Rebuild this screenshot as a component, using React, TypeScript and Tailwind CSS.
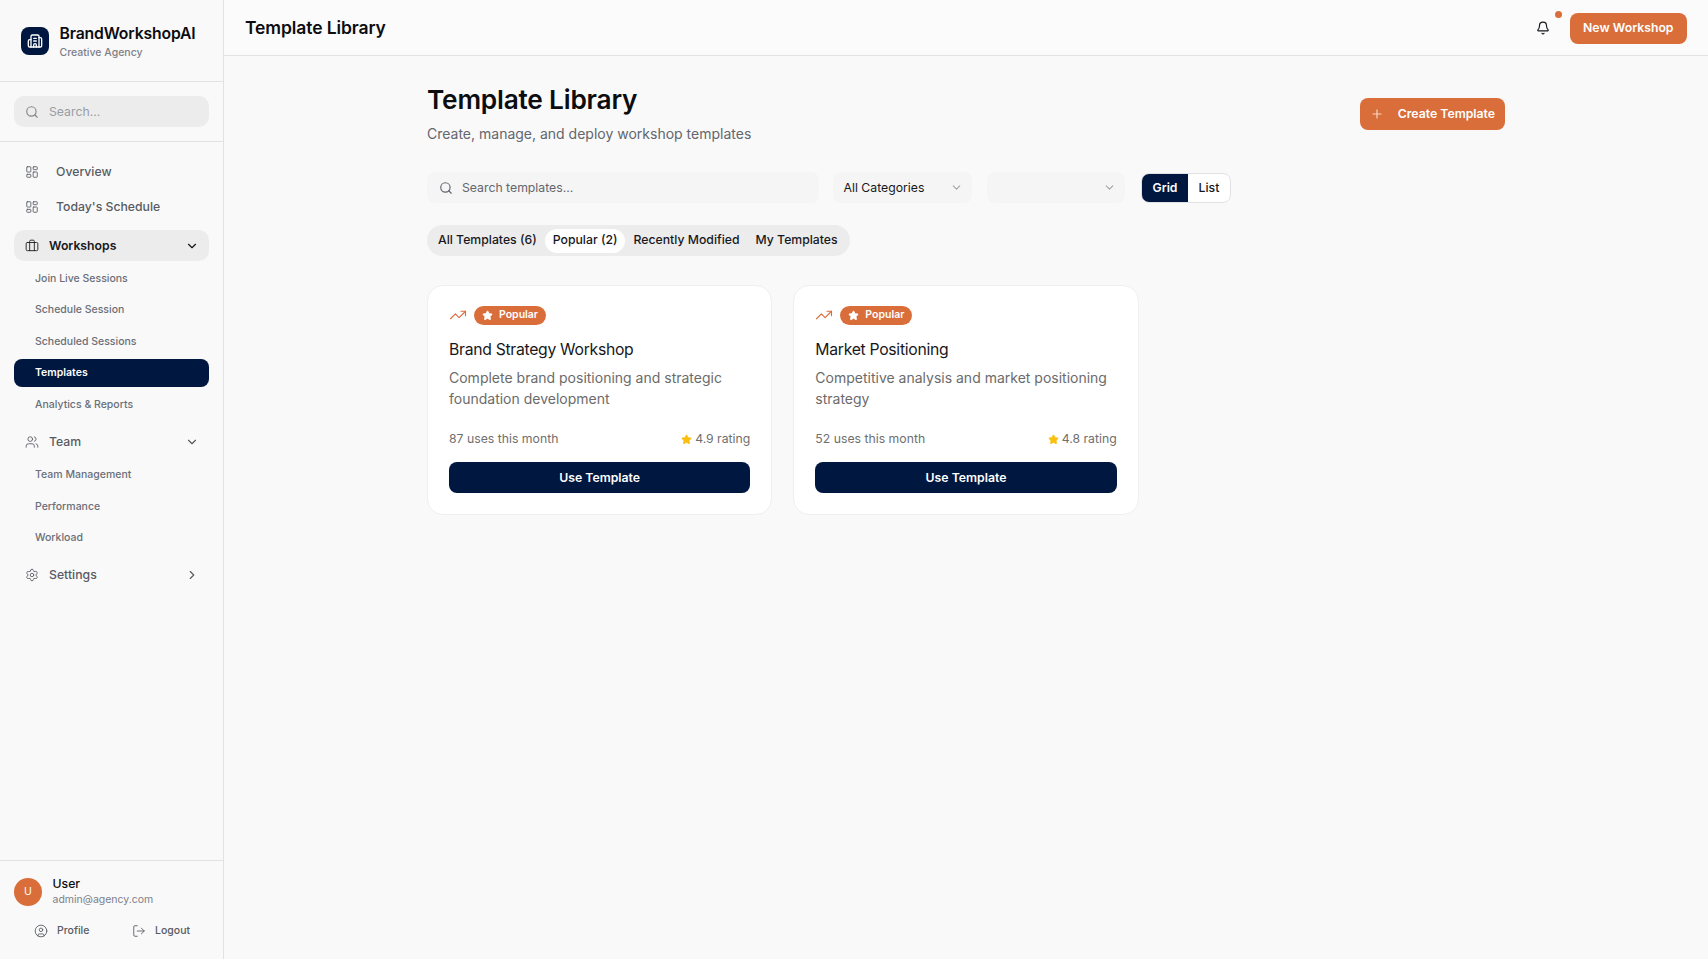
import { Bell, Briefcase, Building2, ChevronDown, ChevronRight, CircleUser, LayoutDashboard, LogOut, Plus, Search, Settings, Star, TrendingUp, Users } from "lucide-react";

const templates = [
  { name: "Brand Strategy Workshop", desc: "Complete brand positioning and strategic foundation development", uses: "87 uses this month", rating: "4.9 rating" },
  { name: "Market Positioning", desc: "Competitive analysis and market positioning strategy", uses: "52 uses this month", rating: "4.8 rating" },
];

const SubItem = ({ label, active }: { label: string; active?: boolean }) => (
  <div className={`h-[28px] pt-[1px] flex items-center pl-[21px] rounded-lg text-[10.5px] ${active ? "bg-[#001740] text-white font-semibold" : "text-[#6b6f78] font-medium"}`}>
    {label}
  </div>
);

const TemplateCard = ({ t }: { t: (typeof templates)[number] }) => (
  <div className="h-[230px] bg-white border border-[#efefef] rounded-2xl px-[21px] pt-[19px]">
    <div className="flex items-center gap-[7px] h-[20px]">
      <TrendingUp className="w-[18px] h-[18px] text-[#d96e3a]" strokeWidth={1.5} />
      <span className="h-[19px] flex items-center gap-[6px] px-[8px] rounded-full bg-[#d96e3a] text-white text-[10.5px] font-semibold">
        <Star className="w-[11px] h-[11px] fill-white" />
        Popular
      </span>
    </div>
    <h3 className="mt-[13px] text-[15.75px] leading-[24px] font-normal text-[#17181c] tracking-[-0.3px]">{t.name}</h3>
    <p className="mt-[5px] text-[14px] leading-[21px] text-[#6b6b6b]">{t.desc}</p>
    <div className="mt-[21px] flex items-center justify-between text-[12.25px] text-[#6f6f6f]">
      <span>{t.uses}</span>
      <span className="flex items-center gap-[3px]">
        <Star className="w-[11px] h-[11px] text-[#fbbf0f] fill-[#fbbf0f]" />
        {t.rating}
      </span>
    </div>
    <button className="mt-[14px] w-full h-[31px] rounded-lg bg-[#001740] text-white text-[12.25px] font-semibold">Use Template</button>
  </div>
);

export default function App() {
  return (
    <div className="flex h-[959px] overflow-hidden bg-[#f9f9f9] font-['Inter',sans-serif]">
      <aside className="w-[224px] shrink-0 h-full flex flex-col border-r border-[#e2e2e2] bg-[#f9f9f9]">
        <div className="h-[82px] shrink-0 flex items-center gap-[10.5px] pl-[21px] border-b border-[#e2e2e2]">
          <div className="w-[28px] h-[28px] rounded-lg bg-[#001740] flex items-center justify-center">
            <Building2 className="w-[16px] h-[16px] text-white" strokeWidth={2} />
          </div>
          <div className="pt-[3px]">
            <div className="text-[15.75px] leading-[20px] font-semibold tracking-[-0.15px] text-[#0c0d10]">BrandWorkshopAI</div>
            <div className="text-[10.5px] leading-[17px] text-[#7d8088] font-medium">Creative Agency</div>
          </div>
        </div>
        <div className="h-[60px] shrink-0 px-[14px] pt-[14px] border-b border-[#e2e2e2]">
          <div className="h-[31px] pt-[1px] rounded-[10px] bg-[#ececec] flex items-center pl-[11px] gap-[10px] text-[12.25px] text-[#9a9ca3]">
            <Search className="w-[14px] h-[14px] text-[#85878d] -mt-[1px]" />
            Search...
          </div>
        </div>
        <nav className="px-[14px] pt-[13px] flex-1">
          <div className="h-[35px] flex items-center pl-[11px] gap-[17px] text-[12.25px] font-medium text-[#585b63]">
            <LayoutDashboard className="w-[14px] h-[14px] -mt-[1px]" strokeWidth={1.5} />
            Overview
          </div>
          <div className="h-[35px] flex items-center pl-[11px] gap-[17px] text-[12.25px] font-medium text-[#585b63]">
            <LayoutDashboard className="w-[14px] h-[14px] -mt-[1px]" strokeWidth={1.5} />
            Today's Schedule
          </div>
          <div className="mt-[5px] h-[31px] pt-[1px] rounded-[10px] bg-[#ececec] flex items-center pl-[11px] pr-[10px] gap-[10px] text-[12.25px] font-semibold text-[#17181c]">
            <Briefcase className="w-[14px] h-[14px] -mt-[1px]" strokeWidth={1.5} />
            <span className="flex-1">Workshops</span>
            <ChevronDown className="w-[14px] h-[14px] -mt-[1px]" />
          </div>
          <div className="mt-[3px] space-y-[3.5px]">
            <SubItem label="Join Live Sessions" />
            <SubItem label="Schedule Session" />
            <SubItem label="Scheduled Sessions" />
            <SubItem label="Templates" active />
            <SubItem label="Analytics & Reports" />
          </div>
          <div className="mt-[8.5px] h-[31px] flex items-center pl-[11px] pr-[10px] gap-[10px] text-[12.25px] font-medium text-[#585b63]">
            <Users className="w-[14px] h-[14px] -mt-[1px]" strokeWidth={1.5} />
            <span className="flex-1">Team</span>
            <ChevronDown className="w-[14px] h-[14px] -mt-[1px]" />
          </div>
          <div className="mt-[3px] space-y-[3.5px]">
            <SubItem label="Team Management" />
            <SubItem label="Performance" />
            <SubItem label="Workload" />
          </div>
          <div className="mt-[8px] h-[31px] flex items-center pl-[11px] pr-[10px] gap-[10px] text-[12.25px] font-medium text-[#585b63]">
            <Settings className="w-[14px] h-[14px] -mt-[1px]" strokeWidth={1.5} />
            <span className="flex-1">Settings</span>
            <ChevronRight className="w-[14px] h-[14px] -mt-[1px]" />
          </div>
        </nav>
        <div className="h-[99px] shrink-0 border-t border-[#e2e2e2] px-[14px] pt-[15px]">
          <div className="flex items-center gap-[10.5px]">
            <div className="w-[28px] h-[28px] rounded-full bg-[#d96e3a] flex items-center justify-center text-white text-[10.5px]">U</div>
            <div>
              <div className="text-[12.25px] leading-[16px] font-medium text-[#0c0d10]">User</div>
              <div className="text-[10.5px] leading-[15px] text-[#7d8088]">admin@agency.com</div>
            </div>
          </div>
          <div className="mt-[16px] flex items-center text-[10.5px] font-medium text-[#585b63]">
            <span className="flex items-center gap-[9px] ml-[20px] w-[98px]">
              <CircleUser className="w-[14px] h-[14px]" strokeWidth={1.5} />
              Profile
            </span>
            <span className="flex items-center gap-[9px]">
              <LogOut className="w-[14px] h-[14px]" strokeWidth={1.5} />
              Logout
            </span>
          </div>
        </div>
      </aside>

      <div className="flex-1 min-w-0 flex flex-col">
        <header className="h-[56px] pt-[1px] shrink-0 flex items-center justify-between px-[21px] bg-[#fbfbfb] border-b border-[#e2e2e2]">
          <h1 className="text-[17.5px] font-semibold tracking-[-0.1px] text-[#0c0d10]">Template Library</h1>
          <div className="flex items-center gap-[20px]">
            <div className="relative">
              <Bell className="w-[14px] h-[14px] text-[#17181c]" />
              <span className="absolute -top-[10.5px] left-[19.5px] w-[7px] h-[7px] rounded-full bg-[#d96e3a]" />
            </div>
            <button className="h-[31px] px-[13.5px] rounded-lg bg-[#d96e3a] text-white text-[12.25px] font-semibold">New Workshop</button>
          </div>
        </header>

        <main className="flex-1 w-[1078px] mx-auto pt-[26px]">
          <div className="flex items-start justify-between">
            <div>
              <h2 className="text-[26.25px] leading-[36px] font-semibold tracking-[-0.2px] text-[#0c0d10]">Template Library</h2>
              <p className="mt-[5px] text-[14px] leading-[21px] text-[#63666d]">Create, manage, and deploy workshop templates</p>
            </div>
            <button className="mt-[16px] h-[32px] px-[10px] rounded-lg bg-[#d96e3a] text-white text-[12.25px] font-semibold flex items-center gap-[14px]">
              <Plus className="w-[14px] h-[14px] text-[#f6d6c6]" />
              Create Template
            </button>
          </div>

          <div className="mt-[28px] flex items-center">
            <div className="w-[392px] h-[31px] pt-[1px] rounded-lg bg-[#f5f5f5] flex items-center pl-[11.5px] gap-[9.5px] text-[12.25px] text-[#63666d]">
              <Search className="w-[14px] h-[14px] -mt-[1px]" />
              Search templates...
            </div>
            <div className="ml-[14px] w-[139px] h-[31px] pt-[1px] rounded-lg bg-[#f5f5f5] flex items-center justify-between pl-[10.5px] pr-[9px] text-[12.25px] text-[#17181c]">
              All Categories
              <ChevronDown className="w-[13px] h-[13px] text-[#a3a3a3] -mt-[1px]" />
            </div>
            <div className="ml-[15px] w-[138px] h-[31px] rounded-lg bg-[#f5f5f5] flex items-center justify-end pr-[9px]">
              <ChevronDown className="w-[13px] h-[13px] text-[#a3a3a3]" />
            </div>
            <div className="ml-[16px] h-[30px] pb-0 rounded-lg border border-[#e2e2e2] bg-white flex overflow-hidden text-[12.25px] font-medium text-[#17181c]">
              <span className="px-[10.5px] pt-[1px] bg-[#001740] text-white font-semibold flex items-center">Grid</span>
              <span className="px-[10.5px] pt-[1px] flex items-center">List</span>
            </div>
          </div>

          <div className="mt-[22px] inline-flex items-center h-[31px] rounded-full bg-[#ececec] px-[4px] text-[12.25px] font-medium text-[#17181c]">
            <span className="px-[7px] mr-[1px]">All Templates (6)</span>
            <span className="px-[8px] h-[24px] flex items-center rounded-full bg-white">Popular (2)</span>
            <span className="px-[8px]">Recently Modified</span>
            <span className="px-[8px]">My Templates</span>
          </div>

          <div className="mt-[29px] grid grid-cols-3 gap-[21px]">
            {templates.map((t) => (
              <TemplateCard key={t.name} t={t} />
            ))}
          </div>
        </main>
      </div>
    </div>
  );
}
